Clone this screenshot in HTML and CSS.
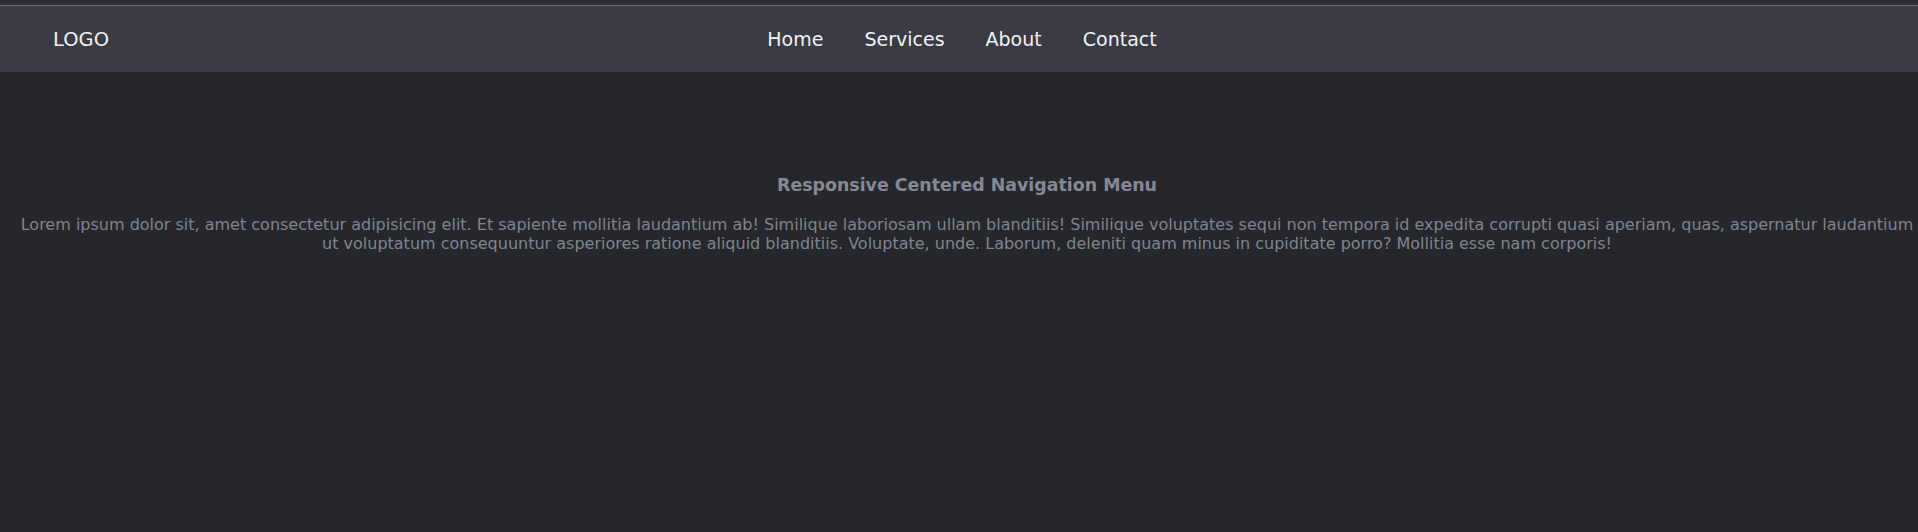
FILE: index.html
```html
<!DOCTYPE html>
<html lang="en">
<head>
<meta charset="utf-8">
<title>Responsive Centered Navigation Menu</title>
<link rel="stylesheet" href="styles.css">
</head>
<body>
<div class="topstrip"></div>
<header class="navbar">
  <div class="logo">LOGO</div>
  <nav class="links">
    <a href="#">Home</a>
    <a href="#">Services</a>
    <a href="#">About</a>
    <a href="#">Contact</a>
  </nav>
  <div class="spacer"></div>
</header>
<main class="content">
  <h1 class="title">Responsive Centered Navigation Menu</h1>
  <p class="text">Lorem ipsum dolor sit, amet consectetur adipisicing elit. Et sapiente mollitia laudantium ab! Similique laboriosam ullam blanditiis! Similique voluptates sequi non tempora id expedita corrupti quasi aperiam, quas, aspernatur laudantium ut voluptatum consequuntur asperiores ratione aliquid blanditiis. Voluptate, unde. Laborum, deleniti quam minus in cupiditate porro? Mollitia esse nam corporis!</p>
</main>
</body>
</html>
```
FILE: styles.css
```css
html, body {
  margin: 0;
  padding: 0;
}
body {
  background: #26272c;
  font-family: "DejaVu Sans", "Liberation Sans", sans-serif;
  min-height: 532px;
}
.topstrip {
  height: 5px;
  background: #2d2e33;
}
.navbar {
  display: grid;
  grid-template-columns: 1fr auto 1fr;
  align-items: center;
  height: 66px;
  background: #3a3b45;
  border-top: 1px solid #6e6f76;
}
.logo {
  padding-left: 53px;
  color: #f2f2f2;
  font-size: 19.5px;
}
.links {
  display: flex;
  gap: 41px;
  padding-left: 6px;
}
.links a {
  color: #f2f2f2;
  text-decoration: none;
  font-size: 19px;
}
.content {
  padding: 0 0 0 16px;
  text-align: center;
}
.title {
  margin: 0;
  padding-top: 101px;
  font-size: 17.4px;
  line-height: 24px;
  font-weight: bold;
  color: #858995;
}
.text {
  margin: 18px 0 0;
  font-size: 16px;
  line-height: 19px;
  color: #7f8590;
}
```
